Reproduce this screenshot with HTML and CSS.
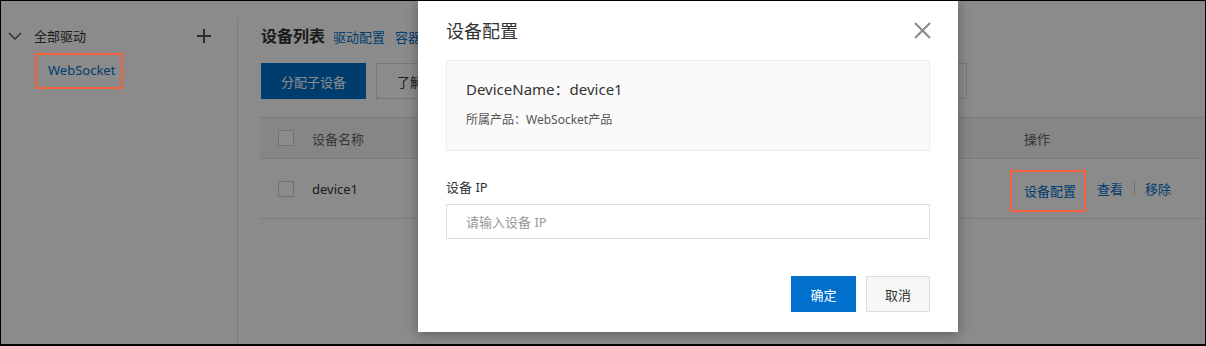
FILE: index.html
```html
<!DOCTYPE html>
<html lang="zh-CN">
<head>
<meta charset="utf-8">
<title>设备配置</title>
<link rel="stylesheet" href="styles.css">
</head>
<body>
<div class="screen">
  <aside class="sidebar">
    <div class="tree-row">
      <svg class="chev" width="14" height="8" viewBox="0 0 14 8"><path d="M1 1 L7 7 L13 1" fill="none" stroke="#555" stroke-width="1.4"/></svg>
      <span class="tree-title">全部驱动</span>
      <svg class="plus" width="14" height="14" viewBox="0 0 14 14"><path d="M7 0 V14 M0 7 H14" stroke="#555" stroke-width="2"/></svg>
    </div>
    <div class="tree-child"><span class="mark mark-side">WebSocket</span></div>
  </aside>
  <main class="main">
    <div class="title-row">
      <h1 class="page-title">设备列表</h1>
      <a class="link">驱动配置</a>
      <a class="link link-2">容器</a>
    </div>
    <div class="toolbar">
      <button class="btn btn-primary">分配子设备</button>
      <button class="btn btn-default">了解</button>
      <div class="search-box"></div>
    </div>
    <div class="table">
      <div class="tr th">
        <div class="td td-check"><span class="checkbox"></span></div>
        <div class="td td-name">设备名称</div>
        <div class="td td-op">操作</div>
      </div>
      <div class="tr">
        <div class="td td-check"><span class="checkbox"></span></div>
        <div class="td td-name">device1</div>
        <div class="td td-actions">
          <a class="link mark mark-op">设备配置</a>
          <a class="link act">查看</a>
          <span class="sep"></span>
          <a class="link act">移除</a>
        </div>
      </div>
    </div>
  </main>
  <div class="mask"></div>
  <div class="modal">
    <div class="modal-head">
      <h2 class="modal-title">设备配置</h2>
      <svg class="close" width="17" height="17" viewBox="0 0 17 17"><path d="M1 1 L16 16 M16 1 L1 16" stroke="#8a8a8a" stroke-width="2"/></svg>
    </div>
    <div class="info">
      <div class="info-name">DeviceName：device1</div>
      <div class="info-prod">所属产品：WebSocket产品</div>
    </div>
    <label class="field-label">设备 IP</label>
    <div class="input"><span class="placeholder">请输入设备 IP</span></div>
    <div class="modal-foot">
      <button class="btn btn-ok">确定</button>
      <button class="btn btn-cancel">取消</button>
    </div>
  </div>
</div>
</body>
</html>
```
FILE: styles.css
```css
* { box-sizing: border-box; }
html, body { margin: 0; padding: 0; background: #fff; }
body {
  font-family: "Noto Sans", "Noto Sans CJK SC", sans-serif;
  color: #333;
  font-size: 13px;
}
.screen {
  position: relative;
  width: 1206px;
  height: 346px;
  border: 1px solid #000;
  border-bottom-width: 2px;
  overflow: hidden;
  display: flex;
  background: #fff;
}
.sidebar {
  width: 237px;
  flex: none;
  margin-top: 17px;
  border-right: 1px solid #e6e6e6;
}
.tree-row {
  display: flex;
  align-items: center;
  height: 35px;
  padding-left: 7px;
}
.chev { margin-right: 12px; }
.tree-title { flex: 1; font-size: 13px; color: #333; }
.plus { margin-right: 26px; }
.tree-child {
  padding-left: 34px;
}
.mark { position: relative; }
.mark::after {
  content: "";
  position: absolute;
  inset: 0;
  border: 2px solid #f2613a;
  z-index: 30;
}
.mark-side {
  display: inline-block;
  height: 36px;
  line-height: 35px;
  width: 88px;
  padding-left: 13px;
  color: #0070cc;
  font-size: 13px;
}
.main {
  flex: 1;
  padding-top: 22px;
  display: flex;
  flex-direction: column;
}
.title-row {
  display: flex;
  align-items: baseline;
  padding-left: 23px;
  height: 25px;
}
.page-title {
  margin: 0;
  font-size: 16px;
  font-weight: 700;
  color: #333;
}
.link { color: #0070cc; font-size: 13px; text-decoration: none; }
.title-row .link { margin-left: 8px; }
.title-row .link-2 { margin-left: 10px; }
.toolbar {
  display: flex;
  align-items: center;
  margin-top: 15px;
  padding-left: 23px;
  margin-right: 238px;
}
.btn {
  font-family: inherit;
  font-size: 13px;
  height: 36px;
  border-radius: 0;
  cursor: pointer;
  padding: 0 20px;
}
.btn-primary { background: #0070cc; color: #fff; border: 1px solid #0070cc; width: 105px; padding: 0; }
.btn-default { background: #fff; color: #333; border: 1px solid #dcdcdc; margin-left: 10px; width: 150px; text-align: left; padding-left: 20px; }
.search-box {
  margin-left: auto;
  width: 220px;
  height: 36px;
  border: 1px solid #dcdcdc;
}
.table {
  margin-top: 18px;
  margin-left: 22px;
  border-top: 1px solid #e3e3e3;
}
.tr {
  display: grid;
  grid-template-columns: 52px 1fr 195px;
  align-items: center;
  height: 60px;
  border-bottom: 1px solid #e3e3e3;
}
.th {
  height: 41px;
  background: #f6f6f6;
  color: #666;
}
.td-check { padding-left: 18px; display: flex; align-items: center; }
.checkbox {
  width: 16px;
  height: 16px;
  border: 1px solid #cfcfcf;
  background: #fff;
}
.td-name { font-size: 13px; }
.th .td-name { color: #666; }
.td-op { padding-left: 14px; color: #666; }
.td-actions { display: flex; align-items: center; }
.mark-op {
  display: inline-block;
  height: 42px;
  line-height: 42px;
  padding: 0 10px 0 14px;
  margin-top: 4px;
}
.act { margin-left: 11px; }
.sep {
  width: 1px;
  height: 13px;
  background: #d5d5d5;
  margin-left: 11px;
  margin-right: -1px;
}
.mask {
  position: absolute;
  inset: 0;
  background: rgba(0, 0, 0, 0.455);
  z-index: 10;
}
.modal {
  position: absolute;
  left: 417px;
  top: -1px;
  width: 540px;
  height: 332px;
  background: #fff;
  z-index: 20;
  padding: 18px 28px 20px;
  box-shadow: 0 2px 12px rgba(0, 0, 0, 0.35);
  display: flex;
  flex-direction: column;
}
.modal-head {
  display: flex;
  align-items: center;
  justify-content: space-between;
  height: 24px;
}
.modal-title {
  margin: 0;
  font-size: 18px;
  font-weight: 400;
  color: #333;
}
.close { margin-right: -1px; }
.info {
  margin-top: 18px;
  height: 91px;
  background: #fafafa;
  border: 1px solid #ececec;
  padding: 16px 19px 0;
}
.info-name { font-size: 15px; color: #333; line-height: 24px; }
.info-prod { font-size: 12px; color: #555; line-height: 18px; margin-top: 10px; }
.field-label {
  margin-top: 27px;
  font-size: 13px;
  color: #333;
  line-height: 18px;
}
.input {
  margin-top: 8px;
  height: 35px;
  border: 1px solid #dcdcdc;
  display: flex;
  align-items: center;
  padding-left: 19px;
}
.placeholder { color: #999; font-size: 13px; }
.modal-foot {
  margin-top: auto;
  display: flex;
  justify-content: flex-end;
  gap: 10px;
}
.btn-ok {
  width: 65px;
  padding: 0;
  background: #0070cc;
  border: 1px solid #0070cc;
  color: #fff;
}
.btn-cancel {
  width: 64px;
  padding: 0;
  background: #f7f7f7;
  border: 1px solid #dcdcdc;
  color: #333;
}
```
